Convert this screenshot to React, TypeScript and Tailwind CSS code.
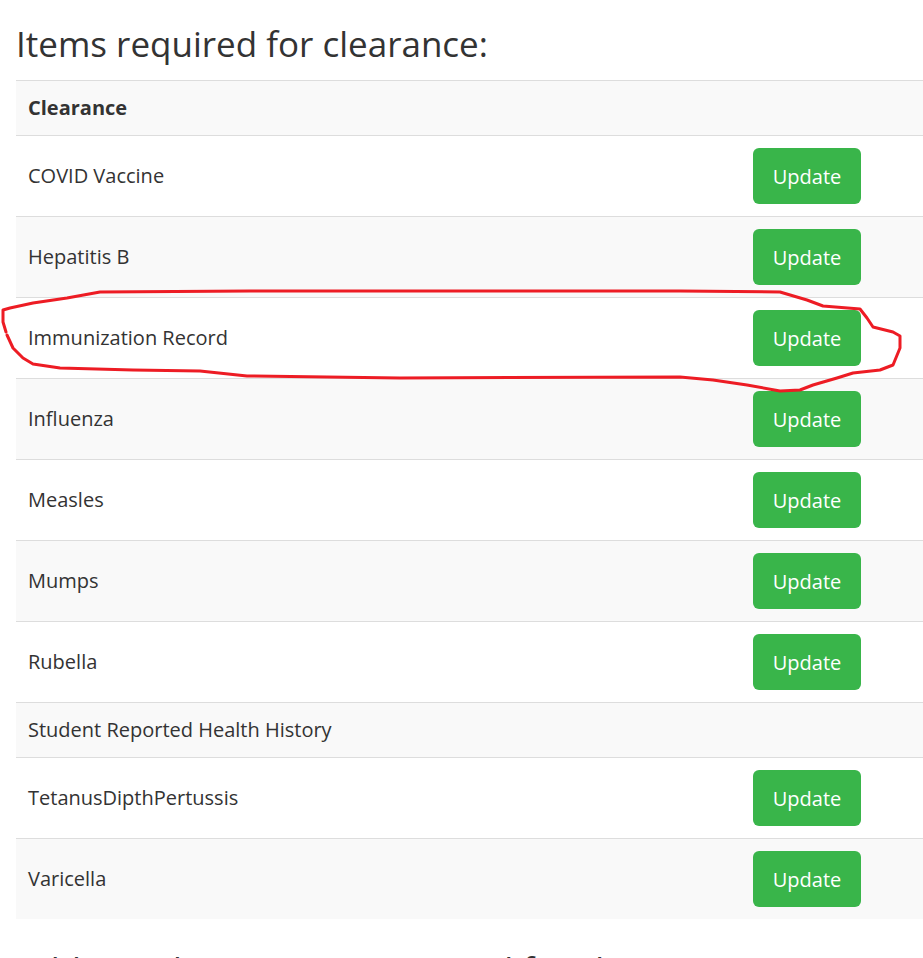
const items: { name: string; update: boolean }[] = [
  { name: "COVID Vaccine", update: true },
  { name: "Hepatitis B", update: true },
  { name: "Immunization Record", update: true },
  { name: "Influenza", update: true },
  { name: "Measles", update: true },
  { name: "Mumps", update: true },
  { name: "Rubella", update: true },
  { name: "Student Reported Health History", update: false },
  { name: "TetanusDipthPertussis", update: true },
  { name: "Varicella", update: true },
];

function Scribble() {
  // hand-drawn red loop around the "Immunization Record" row
  return (
    <svg
      className="pointer-events-none absolute left-0 top-0"
      width="923"
      height="958"
      viewBox="0 0 923 958"
    >
      <path
        d="M6 332 L3 322 L3 310 L10 308 L33 303 L67 298 L100 292 L250 291 L680 291 L780 292 L807 300 L823 306 L860 309 L867 318 L873 327 L893 332 L900 336 L900 348 L893 365 L880 370 L853 373 L837 378 L813 385 L800 390 L780 391 L747 385 L713 380 L680 377 L400 378 L247 376 L200 371 L133 370 L60 368 L33 364 L23 358 L13 348 L7 335"
        fill="none"
        stroke="#ed1c24"
        strokeWidth="3"
        strokeLinejoin="round"
        strokeLinecap="round"
      />
    </svg>
  );
}

export default function App() {
  return (
    <div
      className="relative h-[958px] overflow-hidden bg-white pl-4 text-[#333]"
      style={{ fontFamily: '"Open Sans", "Noto Sans", sans-serif' }}
    >
      <h1 className="mt-[24px] mb-[16px] text-[35px] leading-[40px] font-normal">
        Items required for clearance:
      </h1>

      <div className="text-[20px] leading-[29px]">
        <div className="flex border-t border-[#ddd] bg-[#f9f9f9]">
          <div className="flex-1 px-3 pt-3 pb-[13px] font-bold">Clearance</div>
          <div className="w-[182px]" />
        </div>
        {items.map((item, i) => (
          <div
            key={item.name}
            className={`flex items-center border-t border-[#ddd] ${
              i % 2 === 1 ? "bg-[#f9f9f9]" : "bg-white"
            }`}
          >
            <div className="flex-1 px-3 py-3 leading-[30px]">{item.name}</div>
            <div className="w-[182px] px-3 py-3">
              {item.update && (
                <button className="h-[56px] w-[108px] rounded-[6px] bg-[#39b54a] text-[20px] text-white">
                  Update
                </button>
              )}
            </div>
          </div>
        ))}
      </div>

      <h2 className="mt-[31px] text-[35px] leading-[40px] font-normal">
        Additional items NOT required for clearance:
      </h2>

      <Scribble />
    </div>
  );
}
